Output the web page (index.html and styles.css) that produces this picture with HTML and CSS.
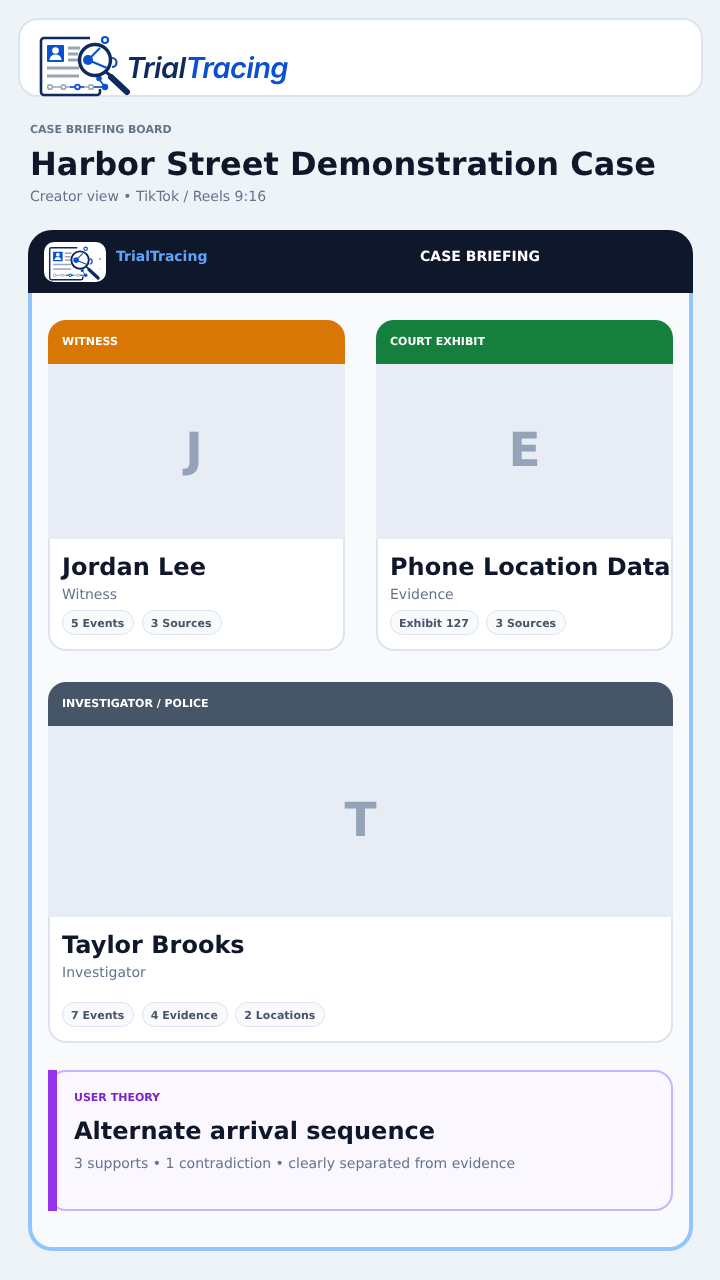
FILE: index.html
```html
<!DOCTYPE html>
<html lang="en">
<head>
    <meta charset="UTF-8">
    <meta name="viewport" content="width=device-width, initial-scale=1.0">
    <title>Harbor Street Demonstration Case</title>
    <link rel="stylesheet" href="styles.css">
</head>
<body>
    <svg class="defs" width="0" height="0" aria-hidden="true">
        <symbol id="logo-mark" viewBox="38 35 96 64">
            <path d="M90 38H44a3 3 0 0 0-3 3v51a3 3 0 0 0 3 3h53a3 3 0 0 0 3-3v-3" fill="#fff" stroke="#0f2a5c" stroke-width="2.600"/>
            <rect x="47" y="45" width="17" height="17" rx="1" fill="#0b50d0"/>
            <circle cx="55.500" cy="50.500" r="3.300" fill="#fff"/>
            <path d="M49.500 60c.5-4 3-5.500 6-5.500s5.500 1.500 6 5.500z" fill="#fff"/>
            <path d="M68 48h12M68 54h10M68 60h10M47 68h32M47 76h32" stroke="#9aa5b4" stroke-width="2.800"/>
            <path d="M50 87h55" stroke="#9aa5b4" stroke-width="1.600"/>
            <path d="M70 87h14M94 87h11" stroke="#0b50d0" stroke-width="1.600"/>
            <circle cx="50" cy="87" r="2.300" fill="#fff" stroke="#9aa5b4" stroke-width="1.600"/>
            <circle cx="63.500" cy="87" r="2.300" fill="#fff" stroke="#9aa5b4" stroke-width="1.600"/>
            <circle cx="77.500" cy="87" r="2.300" fill="#fff" stroke="#0b50d0" stroke-width="1.800"/>
            <circle cx="91" cy="87" r="2.300" fill="#fff" stroke="#9aa5b4" stroke-width="1.600"/>
            <circle cx="105" cy="87" r="3.200" fill="#0b50d0"/>
            <path d="M105 87l-6-8" stroke="#0b50d0" stroke-width="1.600"/>
            <circle cx="99" cy="78.500" r="2.800" fill="#0b50d0"/>
            <circle cx="105" cy="40" r="3" fill="#fff" stroke="#0b50d0" stroke-width="2.200"/>
            <path d="M112 58a4.500 4.500 0 0 1 0 9" fill="none" stroke="#0b50d0" stroke-width="2.200"/>
            <circle cx="95" cy="60" r="15.500" fill="#fff" stroke="#0f2a5c" stroke-width="3.400"/>
            <path d="M88 60l12-12M88 60l19 8" stroke="#0b50d0" stroke-width="2"/>
            <circle cx="88" cy="60" r="5" fill="#0b50d0"/>
            <path d="M106 72l5 4" stroke="#0f2a5c" stroke-width="3"/>
            <path d="M111 77l16 15" stroke="#0f2a5c" stroke-width="6" stroke-linecap="round"/>
        </symbol>
    </svg>

    <div class="top-bar">
        <svg class="top-logo"><use href="#logo-mark"/></svg>
        <span class="wordmark">Trial<span class="wordmark-blue">Tracing</span></span>
    </div>

    <div class="page-head">
        <div class="eyebrow">CASE BRIEFING BOARD</div>
        <h1>Harbor Street Demonstration Case</h1>
        <div class="subtitle">Creator view • TikTok / Reels 9:16</div>
    </div>

    <div class="board">
        <div class="board-head">
            <div class="brand">
                <div class="brand-logo">
                    <svg class="brand-mark">
                        <use href="#logo-mark"/>
                        <circle cx="52" cy="13" r="0.700" fill="#0f2a5c"/>
                        <circle cx="52" cy="23" r="0.500" fill="#9aa5b4"/>
                    </svg>
                </div>
                <span class="brand-name">TrialTracing</span>
            </div>
            <div class="board-title">CASE BRIEFING</div>
        </div>

        <div class="board-body">
            <div class="card-row">
                <div class="card">
                    <div class="card-tag tag-witness">WITNESS</div>
                    <div class="card-image card-image-j">J</div>
                    <div class="card-info">
                        <h2>Jordan Lee</h2>
                        <div class="role">Witness</div>
                        <div class="pills">
                            <span class="pill">5 Events</span>
                            <span class="pill">3 Sources</span>
                        </div>
                    </div>
                </div>
                <div class="card">
                    <div class="card-tag tag-exhibit">COURT EXHIBIT</div>
                    <div class="card-image">E</div>
                    <div class="card-info">
                        <h2>Phone Location Data</h2>
                        <div class="role">Evidence</div>
                        <div class="pills">
                            <span class="pill">Exhibit 127</span>
                            <span class="pill">3 Sources</span>
                        </div>
                    </div>
                </div>
            </div>

            <div class="card card-wide">
                <div class="card-tag tag-police">INVESTIGATOR / POLICE</div>
                <div class="card-image">T</div>
                <div class="card-info">
                    <h2>Taylor Brooks</h2>
                    <div class="role">Investigator</div>
                    <div class="pills">
                        <span class="pill">7 Events</span>
                        <span class="pill">4 Evidence</span>
                        <span class="pill">2 Locations</span>
                    </div>
                </div>
            </div>

            <div class="theory">
                <div class="theory-label">USER THEORY</div>
                <h2>Alternate arrival sequence</h2>
                <div class="theory-note">3 supports • 1 contradiction • clearly separated from evidence</div>
            </div>
        </div>
    </div>
</body>
</html>
```

FILE: styles.css
```css
* {
    box-sizing: border-box;
}
body {
    margin: 0;
    padding: 18px 17px 0 18px;
    background: #eef3f8;
    font-family: "DejaVu Sans", sans-serif;
    color: #0f172a;
    text-rendering: geometricPrecision;
    will-change: transform;
}
h1, h2 {
    margin: 0;
}
.defs {
    position: absolute;
}
.top-bar {
    display: flex;
    align-items: flex-start;
    height: 79px;
    padding: 15px 0 0 18px;
    background: #fff;
    border: 2px solid #dbe4f0;
    border-radius: 20px;
}
.top-logo {
    width: 96px;
    height: 64px;
    flex: none;
}
.wordmark {
    margin: 15px 0 0 -8px;
    font-family: Inter, sans-serif;
    font-style: italic;
    font-weight: 600;
    font-size: 29px;
    line-height: 36px;
    letter-spacing: -0.65px;
    color: #0f2a5c;
}
.wordmark-blue {
    color: #0b50d0;
}
.page-head {
    padding: 26px 12px 0;
}
.eyebrow {
    font-size: 11px;
    line-height: 13px;
    font-weight: 700;
    color: #64748b;
}
h1 {
    margin-top: 9px;
    font-size: 32px;
    line-height: 38px;
}
.subtitle {
    margin-top: 6px;
    font-size: 14px;
    line-height: 17px;
    color: #64748b;
}
.board {
    margin: 24px 10px 0;
}
.board-head {
    display: flex;
    align-items: center;
    height: 63px;
    padding: 0 16px;
    background: #0f172a;
    border-radius: 24px 24px 0 0;
}
.brand {
    display: flex;
    align-items: center;
    gap: 10px;
    width: 239px;
}
.brand-logo {
    width: 62px;
    height: 40px;
    padding: 4px 0 0 4px;
    background: #fff;
    border-radius: 10px;
    overflow: hidden;
}
.brand-mark {
    display: block;
    width: 54px;
    height: 36px;
}
.brand-name {
    margin-bottom: 10px;
    font-size: 14px;
    font-weight: 700;
    color: #60a5fa;
}
.board-title {
    flex: 1;
    margin-bottom: 10px;
    text-align: center;
    font-size: 14px;
    font-weight: 700;
    color: #fff;
}
.board-body {
    height: 958px;
    padding: 27px 16px 0;
    background: #f8fafc;
    border: 4px solid #93c5fd;
    border-top: none;
    border-radius: 0 0 24px 24px;
}
.card-row {
    display: grid;
    grid-template-columns: 297px 297px;
    justify-content: space-between;
    margin-bottom: 31px;
}
.card {
    display: flex;
    flex-direction: column;
    height: 331px;
}
.card-wide {
    height: 361px;
}
.card-tag {
    display: flex;
    align-items: center;
    flex: none;
    height: 44px;
    padding: 0 14px 2px;
    border-radius: 18px 18px 0 0;
    font-size: 11px;
    font-weight: 700;
    color: #fff;
}
.tag-witness {
    background: #d97706;
}
.tag-exhibit {
    background: #15803d;
}
.tag-police {
    background: #475569;
}
.card-image {
    display: flex;
    align-items: center;
    justify-content: center;
    flex: none;
    height: 175px;
    padding-bottom: 2px;
    background: #e8edf5;
    font-size: 47px;
    font-weight: 700;
    color: #94a3b8;
}
.card-image-j {
    padding-right: 5px;
}
.card-wide .card-image {
    height: 191px;
}
.card-info {
    display: flex;
    flex-direction: column;
    flex: 1;
    padding: 13px 12px 14px;
    background: #fff;
    border: 2px solid #dbe4f0;
    border-top: none;
    border-radius: 0 0 18px 18px;
}
.card-info h2 {
    font-size: 24px;
    line-height: 30px;
    white-space: nowrap;
}
.role {
    margin-top: 5px;
    font-size: 14px;
    line-height: 17px;
    color: #64748b;
}
.pills {
    display: flex;
    gap: 7.5px;
    margin-top: auto;
}
.pill {
    height: 25px;
    padding: 0 9px 0 8px;
    background: #f8fafc;
    border: 1px solid #dbe4f0;
    border-radius: 13px;
    font-size: 11px;
    line-height: 25px;
    font-weight: 700;
    color: #475569;
}
.theory {
    position: relative;
    height: 141px;
    margin-top: 27px;
    padding: 19px 24px 0 24px;
    background: #faf7ff;
    border: 2px solid #c4b5fd;
    border-radius: 18px;
}
.theory::before {
    content: "";
    position: absolute;
    left: -2px;
    top: -2px;
    bottom: -2px;
    width: 9px;
    background: #9333ea;
}
.theory-label {
    font-size: 11px;
    line-height: 13px;
    font-weight: 700;
    color: #7e22ce;
}
.theory h2 {
    margin-top: 12px;
    font-size: 24px;
    line-height: 30px;
}
.theory-note {
    margin-top: 10px;
    font-size: 14px;
    line-height: 17px;
    color: #64748b;
}
```
